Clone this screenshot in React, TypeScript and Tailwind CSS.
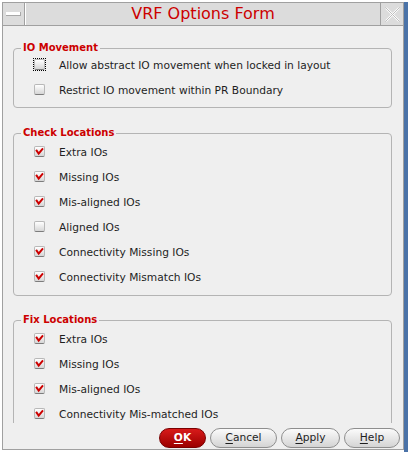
import React from 'react';

interface Row {
  label: string;
  checked: boolean;
  focused?: boolean;
}

const ioMovement: Row[] = [
  { label: 'Allow abstract IO movement when locked in layout', checked: false, focused: true },
  { label: 'Restrict IO movement within PR Boundary', checked: false },
];

const checkLocations: Row[] = [
  { label: 'Extra IOs', checked: true },
  { label: 'Missing IOs', checked: true },
  { label: 'Mis-aligned IOs', checked: true },
  { label: 'Aligned IOs', checked: false },
  { label: 'Connectivity Missing IOs', checked: true },
  { label: 'Connectivity Mismatch IOs', checked: true },
];

const fixLocations: Row[] = [
  { label: 'Extra IOs', checked: true },
  { label: 'Missing IOs', checked: true },
  { label: 'Mis-aligned IOs', checked: true },
  { label: 'Connectivity Mis-matched IOs', checked: true },
];

const CheckBox: React.FC<{ checked: boolean; focused?: boolean }> = ({ checked, focused }) => (
  <div
    className={
      focused
        ? 'w-[13px] h-[13px] border border-dotted border-black flex items-center justify-center'
        : 'w-[13px] h-[13px] flex items-center justify-center'
    }
  >
    <div className="w-[11px] h-[11px] rounded-[2px] border border-[#b8b8b8] border-b-[#7c7c7c] bg-gradient-to-b from-white to-[#d6d6d6] flex items-center justify-center">
      {checked && (
        <svg width="11" height="11" viewBox="0 0 11 11">
          <polyline points="2,4.5 4.5,8 9,2.5" fill="none" stroke="#cc0000" strokeWidth="2.4" strokeLinecap="square" />
        </svg>
      )}
    </div>
  </div>
);

const Group: React.FC<{ title: string; rows: Row[]; className: string }> = ({ title, rows, className }) => (
  <div className={`relative border border-[#b4b4b4] rounded-[4px] ${className}`}>
    <span className="absolute -top-[8px] left-[7px] px-[2px] bg-[#efefef] text-[10px] font-bold text-[#cc0000] leading-[14px]">
      {title}
    </span>
    {rows.map((r) => (
      <div key={r.label} className="h-[25px] flex items-center pl-[19px]">
        <CheckBox checked={r.checked} focused={r.focused} />
        <span className="ml-[13px] pt-[2px] text-[10.67px] text-[#1e1e1e]">{r.label}</span>
      </div>
    ))}
  </div>
);

const Btn: React.FC<{ ul: string; rest: string; w: string; primary?: boolean }> = ({ ul, rest, w, primary }) => (
  <div
    className={
      primary
        ? `${w} h-[20px] rounded-full border border-[#7a0000] bg-gradient-to-b from-[#d81a1a] to-[#9c0000] flex items-center justify-center text-white font-bold text-[10.67px]`
        : `${w} h-[20px] rounded-full border border-[#8e8e8e] bg-gradient-to-b from-[#fbfbfb] to-[#d4d4d4] flex items-center justify-center text-[#1e1e1e] text-[10.67px]`
    }
  >
    <span className="underline underline-offset-2">{ul}</span>
    <span>{rest}</span>
  </div>
);

export default function App() {
  return (
    <div className="w-[408px] h-[453px] bg-white pt-[2px] pl-[2px] flex overflow-hidden" style={{ fontFamily: '"DejaVu Sans", sans-serif' }}>
      <div className="w-[402px] h-[448px] border border-[#a0a0a0] bg-[#efefef] flex flex-col">
        {/* title bar */}
        <div className="h-[23px] flex bg-[#dcdcdc] border-b border-[#a0a0a0]">
          <div className="w-[22px] border-r border-[#a0a0a0] flex items-center justify-center">
            <div className="w-[15px] h-[4px] bg-white border-b border-r border-[#a8a8a8]" />
          </div>
          <div className="flex-1 border-l border-white flex items-center justify-center text-[16px] text-[#cc0000] leading-none">
            VRF Options Form
          </div>
          <div className="w-[23px] border-l border-[#a0a0a0] flex items-center justify-center">
            <svg width="17" height="17" viewBox="0 0 17 17">
              <path d="M2 2 L15 15 M15 2 L2 15" stroke="#ffffff" strokeWidth="2" />
              <path d="M1.5 1.5 L15.5 15.5 M15.5 1.5 L1.5 15.5" stroke="#bdbdbd" strokeWidth="1" />
            </svg>
          </div>
        </div>

        {/* scroll content */}
        <div className="h-[397px] overflow-hidden pl-[10px] pr-[11px] pt-[22px]">
          <Group title="IO Movement" rows={ioMovement} className="pt-[3px] pb-[5px]" />
          <Group title="Check Locations" rows={checkLocations} className="mt-[25px] pt-[5px] pb-[6px]" />
          <Group title="Fix Locations" rows={fixLocations} className="mt-[24px] pt-[5px] pb-[6px]" />
        </div>

        {/* buttons */}
        <div className="flex-1 flex justify-end items-start gap-[4px] pr-[3px] pt-[5px]">
          <Btn ul="O" rest="K" w="w-[47px]" primary />
          <Btn ul="C" rest="ancel" w="w-[67px]" />
          <Btn ul="A" rest="pply" w="w-[59px]" />
          <Btn ul="H" rest="elp" w="w-[56px]" />
        </div>
      </div>
      <div className="w-[4px] h-[450px] bg-[#4b73a8]" />
    </div>
  );
}
